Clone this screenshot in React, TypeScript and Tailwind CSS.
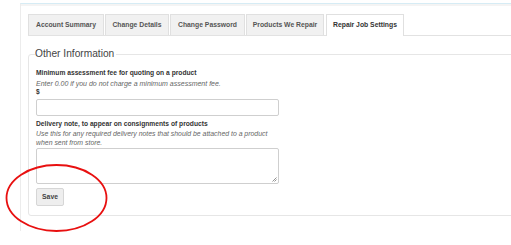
import React from "react";

const tabs = [
  { t: "Account Summary", w: "w-[76px]" },
  { t: "Change Details", w: "w-[64px]" },
  { t: "Change Password", w: "w-[75px]" },
  { t: "Products We Repair", w: "w-[78px]" },
];

export default function App() {
  return (
    <div className="relative w-[511px] h-[245px] overflow-hidden bg-white" style={{ fontFamily: '"Liberation Sans", Arial, sans-serif' }}>
      <div className="ml-[20px] mt-[3px] h-[228px] border-t border-l border-t-[#d6ecf5] border-l-[#ececec]">
        <div className="h-[2px] bg-[#f4f4f4]" />
        <div className="pl-[7px] pt-[7px]">
          <div className="flex items-end gap-[1px] border-b border-[#e2e2e2] h-[23px]">
            {tabs.map((x) => (
              <div key={x.t} className={`${x.w} h-[21px] flex items-center justify-center bg-[#f1f1f1] border border-[#e0e0e0] border-b-0 text-[6.8px] font-bold text-[#555] whitespace-nowrap`}>
                {x.t}
              </div>
            ))}
            <div className="w-[78px] ml-[1px] h-[22px] -mb-px flex items-center justify-center bg-white border border-[#e0e0e0] border-b-0 text-[6.8px] font-bold text-[#333] whitespace-nowrap">
              Repair Job Settings
            </div>
          </div>
          <fieldset className="mt-[12px] mr-[-20px] border border-[#e6e6e6] rounded-[3px] pl-[7px] pb-[7px] h-[168px]">
            <legend className="px-0 text-[10.2px] text-[#444] leading-[12px] -ml-[1px] pr-[2px]">Other Information</legend>
            <div className="mt-[8px] text-[6.7px] font-bold text-[#333] leading-[9px]">Minimum assessment fee for quoting on a product</div>
            <div className="mt-[3px] text-[7px] italic text-[#666] leading-[8px]">Enter 0.00 if you do not charge a minimum assessment fee.</div>
            <div className="text-[6.6px] font-bold text-[#333] leading-[8px]">$</div>
            <div className="mt-[3px] w-[243px] h-[17px] border border-[#cfcfcf] rounded-[2px] bg-white" />
            <div className="mt-[3px] text-[6.7px] font-bold text-[#333] leading-[9px]">Delivery note, to appear on consignments of products</div>
            <div className="mt-[1px] text-[6.9px] italic text-[#666] leading-[9px] w-[260px]">
              Use this for any required delivery notes that should be attached to a product<br />when sent from store.
            </div>
            <div className="relative mt-[1px] w-[243px] h-[36px] border border-[#cfcfcf] rounded-[2px] bg-white">
              <svg className="absolute right-[1px] bottom-[1px]" width="5" height="5" viewBox="0 0 5 5">
                <path d="M4.5 0.5 L0.5 4.5 M4.5 2.5 L2.5 4.5" stroke="#777" strokeWidth="0.8" />
              </svg>
            </div>
            <div className="mt-[4px] w-[28px] h-[18px] flex items-center justify-center bg-[#eeeeee] border border-[#d6d6d6] rounded-[2px] text-[6.8px] font-bold text-[#444]">
              Save
            </div>
          </fieldset>
        </div>
      </div>
      <svg className="absolute left-0 top-0 pointer-events-none" width="511" height="245">
        <ellipse cx="56.5" cy="198" rx="50" ry="33" fill="none" stroke="#e81010" strokeWidth="1.8" />
      </svg>
    </div>
  );
}
